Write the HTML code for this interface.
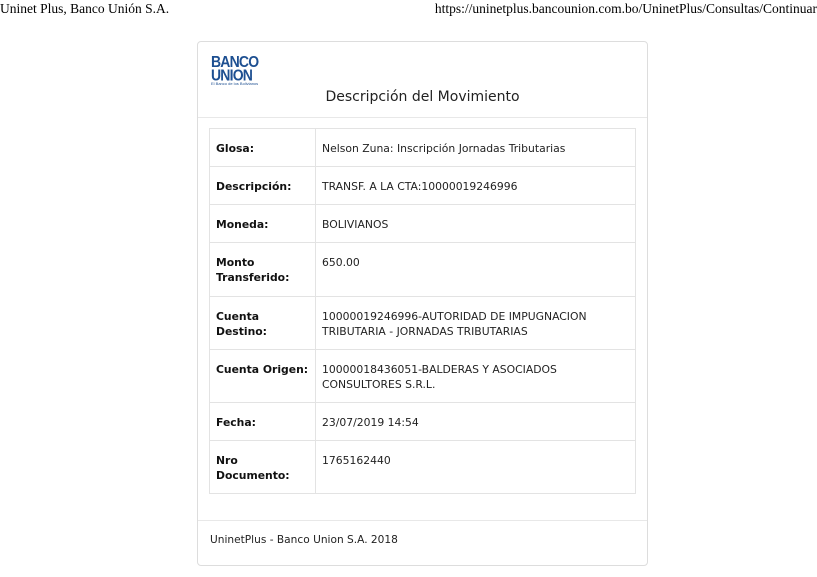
<!DOCTYPE html><html><head><meta charset="utf-8"><style>
body{margin:0;width:817px;height:577px;position:relative;background:#fff;font-family:"DejaVu Sans",Verdana,sans-serif;color:#222;overflow:hidden}
.t{position:absolute;font-family:"Liberation Serif",serif;font-size:13.5px;top:1px;color:#000;white-space:nowrap}
.card{position:absolute;left:197px;top:41px;width:451px;height:525px;border:1px solid #ddd;border-radius:4px;box-sizing:border-box}
.hl{position:absolute;left:0;right:0;height:1px;background:#e8e8e8}
table{position:absolute;left:11px;top:86px;width:427px;border-collapse:collapse;font-size:10.8px}
td{border:1px solid #e3e3e3;vertical-align:top;padding:12px 6px 0 6px;line-height:15px;box-sizing:border-box}
td.l{width:106px;font-weight:bold;color:#111;white-space:nowrap}
</style></head><body>
<div class="t" style="left:0">Uninet Plus, Banco Unión S.A.</div>
<div class="t" style="right:0">https://uninetplus.bancounion.com.bo/UninetPlus/Consultas/Continuar</div>
<div class="card">
<div style="position:absolute;left:13px;top:13px;color:#1d4f91;font-weight:bold;font-size:14px;line-height:12px;letter-spacing:-0.8px;font-family:'Liberation Sans',sans-serif;transform:scaleY(1.1);transform-origin:top left">BANCO<br>UNION</div>
<div style="position:absolute;left:13px;top:39px;color:#1d4f91;font-size:4px;font-family:'Liberation Sans',sans-serif">El Banco de los Bolivianos</div>
<div style="position:absolute;left:0;right:0;top:47px;text-align:center;font-size:14px;color:#222">Descripción del Movimiento</div>
<div class="hl" style="top:75px"></div>
<table>
<tr style="height:38px"><td class="l">Glosa:</td><td>Nelson Zuna: Inscripción Jornadas Tributarias</td></tr>
<tr style="height:38px"><td class="l">Descripción:</td><td>TRANSF. A LA CTA:10000019246996</td></tr>
<tr style="height:38px"><td class="l">Moneda:</td><td>BOLIVIANOS</td></tr>
<tr style="height:54px"><td class="l">Monto<br>Transferido:</td><td>650.00</td></tr>
<tr style="height:53px"><td class="l">Cuenta<br>Destino:</td><td>10000019246996-AUTORIDAD DE IMPUGNACION TRIBUTARIA - JORNADAS TRIBUTARIAS</td></tr>
<tr style="height:53px"><td class="l">Cuenta Origen:</td><td>10000018436051-BALDERAS Y ASOCIADOS CONSULTORES S.R.L.</td></tr>
<tr style="height:38px"><td class="l">Fecha:</td><td>23/07/2019 14:54</td></tr>
<tr style="height:53px"><td class="l">Nro<br>Documento:</td><td>1765162440</td></tr>
</table>
<div class="hl" style="top:478px"></div>
<div style="position:absolute;left:12px;top:492px;font-size:10.6px">UninetPlus - Banco Union S.A. 2018</div>
</div>
</body></html>
